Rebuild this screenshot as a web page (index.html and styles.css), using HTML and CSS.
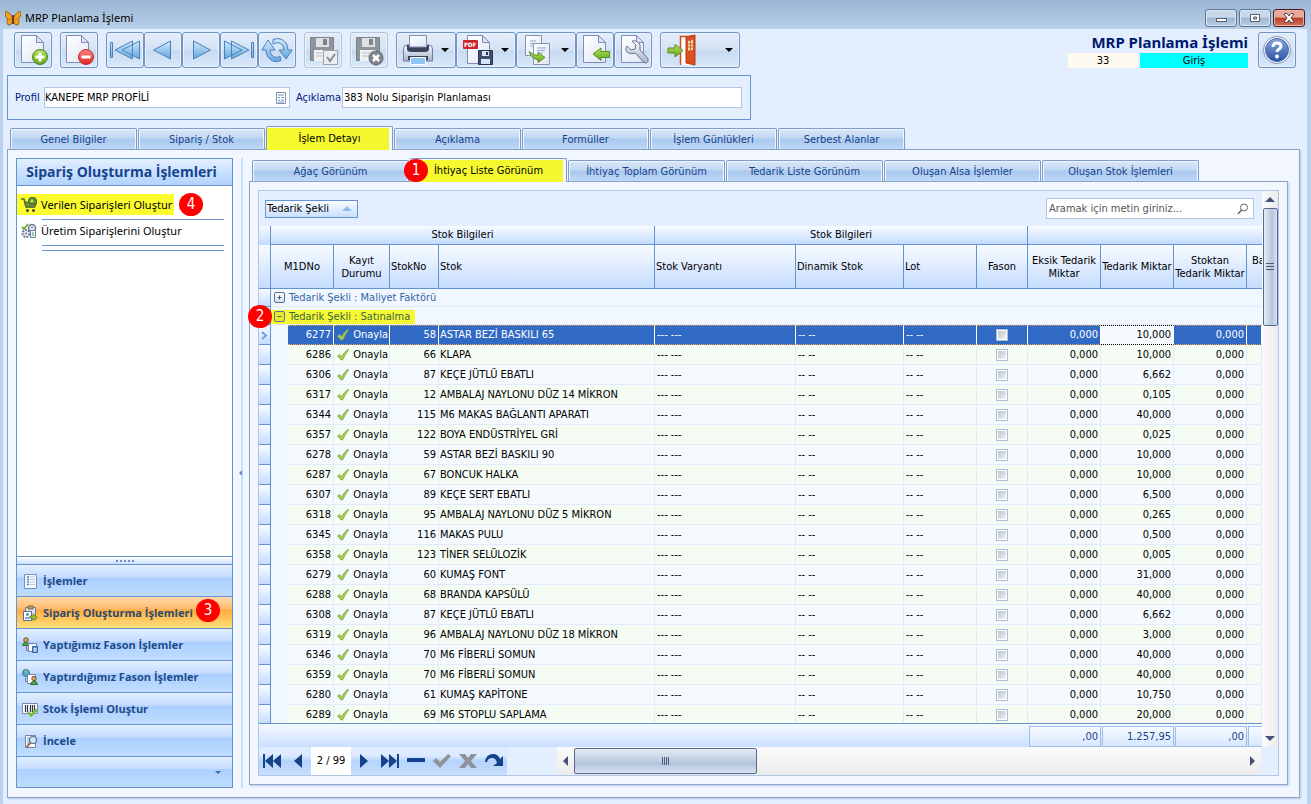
FILE: index.html
```html
<!DOCTYPE html>
<html lang="tr">
<head>
<meta charset="utf-8">
<title>MRP Planlama İşlemi</title>
<link rel="stylesheet" href="styles.css">
</head>
<body>
<svg class="defs" aria-hidden="true">
  <defs>
    <linearGradient id="g-blue" x1="0" y1="0" x2="0" y2="1"><stop offset="0" stop-color="#d3ebfb"/><stop offset="1" stop-color="#5fa6dc"/></linearGradient>
    <linearGradient id="g-page" x1="0" y1="0" x2="1" y2="1"><stop offset="0" stop-color="#fff"/><stop offset="1" stop-color="#dfe6f5"/></linearGradient>
    <linearGradient id="g-green" x1="0" y1="0" x2="0" y2="1"><stop offset="0" stop-color="#b9e35c"/><stop offset="1" stop-color="#5fa61c"/></linearGradient>
    <linearGradient id="g-red" x1="0" y1="0" x2="0" y2="1"><stop offset="0" stop-color="#ff8a80"/><stop offset="1" stop-color="#dc2020"/></linearGradient>
    <linearGradient id="g-help" x1="0" y1="0" x2="0" y2="1"><stop offset="0" stop-color="#88a8dd"/><stop offset="1" stop-color="#2a52a6"/></linearGradient>
    <linearGradient id="g-steel" x1="0" y1="0" x2="0" y2="1"><stop offset="0" stop-color="#fafcff"/><stop offset="1" stop-color="#a5afc8"/></linearGradient>
    <symbol id="i-page" viewBox="0 0 32 32"><path d="M5.500 1.500h15l7 7v20h-22z" fill="url(#g-page)" stroke="#7f8cba"/><path d="M20.500 1.500v7h7z" fill="#dbe3f3" stroke="#7f8cba"/></symbol>
    <symbol id="i-tick" viewBox="0 0 12 12"><path d="M.5 7 2.500 5.500l2 2Q7.500 3 10.500 .5h1.200Q8.500 5 5.500 11H4z" fill="#a5cf55" stroke="#83a94a" stroke-width=".8"/></symbol>
    <symbol id="i-disk" viewBox="0 0 26 26"><path d="M1.500 1.500h23v23h-23z" fill="#8e959d" stroke="#7c838b"/><path d="M7 2h13v9H7z" fill="#dfe2e5"/><path d="M14 3h4v6h-4z" fill="#7d848c"/><path d="M5 14h16v11H5z" fill="#eff1f3"/><path d="M7 17h12M7 20h12" stroke="#b9bec4"/></symbol>
  </defs>
</svg>

<div class="window">
  <header class="titlebar">
    <svg class="app-icon" viewBox="0 0 16 16"><path d="M8 9Q6 3 1 1L0 2q0 5 2.500 7-1.500 3 .5 6l3-.5Q7 13 8 9zM8 9q2-6 7-8l1 1q0 5-2.500 7 1.500 3-.5 6l-3-.5Q9 13 8 9z" fill="#f7a11c" stroke="#6b3c0c" stroke-width=".6"/><path d="M8 5v9" stroke="#5c3210" stroke-width="1.800"/><path d="M2.500 9 8 10l5.500-1" stroke="#a85f10" stroke-width=".6" fill="none"/></svg>
    <span class="title">MRP Planlama İşlemi</span>
    <div class="win-buttons">
      <button class="win" aria-label="Küçült"><svg viewBox="0 0 14 12"><rect x="2.500" y="6.500" width="10" height="3" fill="#fff" stroke="#555d6a"/></svg></button>
      <button class="win" aria-label="Büyüt"><svg viewBox="0 0 14 12"><path d="M2.500 2.500h9v7h-9zM5.500 5v2h3v-2z" fill="#fff" stroke="#555d6a" fill-rule="evenodd"/></svg></button>
      <button class="win close" aria-label="Kapat"><svg viewBox="0 0 14 12"><path d="m2 2 1-.5h2L7 4l2-2.500h2l1 .5-3 4 3 4-1 .5H9L7 8l-2 2.500H3L2 10l3-4z" fill="#fff" stroke="#5b4048"/></svg></button>
    </div>
  </header>

  <div class="body">
    <div class="toolbar">
      <div class="group"><button class="tool" aria-label="Yeni"><svg viewBox="0 0 32 32"><use href="#i-page" width="32" height="32" x="-1"/><circle cx="23" cy="23" r="7.500" fill="url(#g-green)" stroke="#4c7d24"/><path d="M23 18.500v9M18.500 23h9" stroke="#fff" stroke-width="3"/></svg></button></div>
      <div class="group"><button class="tool" aria-label="Sil"><svg viewBox="0 0 32 32"><use href="#i-page" width="32" height="32" x="-2"/><circle cx="23" cy="23" r="7.500" fill="url(#g-red)" stroke="#c62828"/><path d="M18.500 23h9" stroke="#fff" stroke-width="3"/></svg></button></div>
      <div class="group">
        <button class="tool" aria-label="İlk"><svg viewBox="0 0 32 32"><path d="M1.500 8.500h2v15h-2zM23.500 7v18L6 16zM30.500 7v18L13 16z" fill="url(#g-blue)" stroke="#4b80bd"/></svg></button>
        <button class="tool" aria-label="Önceki"><svg viewBox="0 0 32 32"><path d="M23.500 7v18L6.500 16z" fill="url(#g-blue)" stroke="#4b80bd"/></svg></button>
        <button class="tool" aria-label="Sonraki"><svg viewBox="0 0 32 32"><path d="M8.500 7v18l17-9z" fill="url(#g-blue)" stroke="#4b80bd"/></svg></button>
        <button class="tool" aria-label="Son"><svg viewBox="0 0 32 32"><path d="M28.500 8.500h2v15h-2zM8.500 7v18L26 16zM1.500 7v18L19 16z" fill="url(#g-blue)" stroke="#4b80bd"/></svg></button>
        <button class="tool" aria-label="Yenile"><svg viewBox="0 0 32 32"><path d="M12 5.500Q20 2.500 25 9q2 3 2 7h4l-6 9-7-9h5q0-5-4-7-4-1-7 1z" fill="url(#g-blue)" stroke="#4b80bd"/><path d="M20 26.500Q12 30 7 23q-2-3-2-7H1l6-10 7 10H9q0 5 4 7 4 1 6-1z" fill="url(#g-blue)" stroke="#4b80bd"/></svg></button>
      </div>
      <div class="group"><button class="tool" disabled aria-label="Kaydet"><svg viewBox="0 0 32 32"><use href="#i-disk" x="2" y="2" width="26" height="26"/><rect x="16.500" y="16.500" width="14" height="14" fill="#eceff2" stroke="#9ba3ab"/><path d="m20 23 3 4 5-7" fill="none" stroke="#838a92" stroke-width="2"/></svg></button></div>
      <div class="group"><button class="tool" disabled aria-label="Vazgeç"><svg viewBox="0 0 32 32"><use href="#i-disk" x="2" y="2" width="26" height="26"/><circle cx="23" cy="24" r="7" fill="#80868c" stroke="#61676d"/><path d="m20 21 6 6m0-6-6 6" stroke="#fff" stroke-width="2.600"/></svg></button></div>
      <div class="group">
        <button class="tool wide" aria-label="Yazdır"><svg viewBox="0 0 32 32"><path d="M7.500 1.500h17v13h-17z" fill="url(#g-page)" stroke="#8791b8"/><path d="M1.500 15q0-4 4-4h21q4 0 4 4v12h-29z" fill="url(#g-steel)" stroke="#6f7a9c"/><path d="M5 11h22v4q0 3-4 3H9q-4 0-4-3z" fill="#39445f"/><path d="M7.500 1.500h17V13h-17z" fill="url(#g-page)" stroke="#8791b8"/><path d="M6 22h20v4H6z" fill="#3a4560"/><path d="M8.500 23.500h15v7h-15z" fill="#8fc6f3" stroke="#fff"/></svg><i class="caret"></i></button>
        <button class="tool wide" aria-label="PDF kaydet"><svg viewBox="0 0 32 32"><path d="M5.500 1.500h15l7 7v21h-22z" fill="url(#g-page)" stroke="#7f8cba"/><path d="M20.500 1.500v7h7z" fill="#dbe3f3" stroke="#7f8cba"/><rect x="1" y="6" width="15" height="9" rx="1" fill="#c9252b"/><text x="2" y="13" class="pdf">PDF</text><path d="M16.500 16.500h14v14h-14z" fill="#414d69" stroke="#2c3650"/><path d="M20 17h7v5h-7zM19 25h9v5h-9z" fill="#d5e6f8"/><path d="M24 18h2v3h-2z" fill="#2c3650"/></svg><i class="caret"></i></button>
        <button class="tool wide" aria-label="Aktar"><svg viewBox="0 0 32 32"><path d="M3.500 1.500h16v20h-16z" fill="url(#g-page)" stroke="#8791b8"/><path d="M8 7h6M8 9.500h7M8 12h4" stroke="#8fa0cb"/><path d="M11.500 9.500h16v21h-16z" fill="url(#g-page)" stroke="#8791b8"/><path d="M15 14h9M15 16.500h8M15 19h6" stroke="#8fa0cb"/><path d="M7 17.500q4 4 9 4v-3l7 5-7 5v-3q-6 0-9-8z" fill="url(#g-green)" stroke="#5b8f22"/></svg><i class="caret"></i></button>
        <button class="tool" aria-label="İçe al"><svg viewBox="0 0 32 32"><use href="#i-page" width="32" height="32" x="-1"/><path d="m14 20 8-6v3.500h8.500v6H22v3z" fill="url(#g-green)" stroke="#5b8f22"/></svg></button>
        <button class="tool" aria-label="Ayarlar"><svg viewBox="0 0 32 32"><use href="#i-page" width="32" height="32" x="-1"/><path d="M10 12l4 4 4-1 1-4-4-4q6-1 8 4v5l7.500 8q2 4-2 5-2 0-3-2l-7-8q-8 2-9.500-3-.5-3 1-4z" fill="url(#g-steel)" stroke="#65718f"/></svg></button>
      </div>
      <div class="group"><button class="tool exit" aria-label="Çıkış"><svg viewBox="0 0 32 32"><path d="M14.500 31V2.500H28V31" fill="#fff" stroke="#d74a1d" stroke-width="1.500"/><path d="m20 3 9-2v30l-9-2z" fill="#dc5123" stroke="#b93d12"/><path d="m22 7 5-1v10l-5 .5z" fill="#f6dca5"/><path d="M24.500 6v10M22 10h5M22 13h5" stroke="#b9702c"/><path d="M2 14h7v-3.500l8 6L9 23v-4H2z" fill="url(#g-green)" stroke="#5b8f22"/></svg><i class="caret"></i></button></div>
      <div class="doc-info">
        <h1>MRP Planlama İşlemi</h1>
        <div class="status"><span class="doc-no">33</span><span class="doc-state">Giriş</span></div>
      </div>
      <button class="tool help" aria-label="Yardım"><svg viewBox="0 0 32 32"><circle cx="16" cy="16" r="13.500" fill="#fff" stroke="#8193ba"/><circle cx="16" cy="16" r="11.500" fill="url(#g-help)" stroke="#4d68a5"/><path d="M12 13q0-4 4-4t4 3.500q0 1.500-2.500 3-1.500 1-1.500 2.500" fill="none" stroke="#fff" stroke-width="3"/><circle cx="16" cy="22.500" r="2" fill="#fff"/></svg></button>
    </div>

    <form class="profile-box">
      <label for="profil">Profil</label>
      <div class="lookup"><input id="profil" value="KANEPE MRP PROFİLİ"><button type="button" aria-label="Seç"><svg viewBox="0 0 12 12"><path d="M1.500.5h9v11h-9z" fill="#fff" stroke="#7d8fb5"/><path d="M3 3h6M3 5.500h2M6 5.500h3M3 8h2M6 8h3M3 10h6" stroke="#7d8fb5"/></svg></button></div>
      <label for="aciklama" class="second">Açıklama</label>
      <input id="aciklama" value="383 Nolu Siparişin Planlaması">
    </form>

    <nav class="tabs main-tabs">
      <button class="tab">Genel Bilgiler</button><button class="tab">Sipariş / Stok</button><button class="tab active">İşlem Detayı</button><button class="tab">Açıklama</button><button class="tab">Formüller</button><button class="tab">İşlem Günlükleri</button><button class="tab">Serbest Alanlar</button>
    </nav>

    <main class="panel">
      <aside class="side">
        <h2>Sipariş Oluşturma İşlemleri</h2>
        <div class="side-items">
          <div class="side-row"><a href="#" class="side-link marked"><svg viewBox="0 0 16 16"><path d="M0 2h3l2 8h9" fill="none" stroke="#52662a" stroke-width="1.500"/><path d="M4 5h12l-2 5H5z" fill="#74913b" stroke="#52662a"/><circle cx="11.500" cy="4" r="4" fill="#5f8f32" stroke="#466b22"/><path d="m9 5 2-3 2 3z" fill="#d3ee4f"/><circle cx="6.500" cy="13.500" r="1.500" fill="#3f4a3a"/><circle cx="12.500" cy="13.500" r="1.500" fill="#3f4a3a"/></svg>Verilen Siparişleri Oluştur</a><b class="badge">4</b></div>
          <div class="side-row last"><a href="#" class="side-link"><svg viewBox="0 0 16 16"><circle cx="11" cy="5" r="3.500" fill="#e9edf5" stroke="#6f7a95" stroke-width="1.500"/><circle cx="5" cy="10.500" r="3.500" fill="#e9edf5" stroke="#6f7a95" stroke-width="2" stroke-dasharray="2 1"/><path d="M9.500 7.500h5v7h-5z" fill="#f4f7ff" stroke="#7382a8"/><path d="M11 10h2M11 12h2" stroke="#58a63c"/><path d="m1 4 2 2 4-5" fill="none" stroke="#67a835" stroke-width="1.800"/><circle cx="5" cy="10.500" r="1" fill="#6f7a95"/><circle cx="11" cy="4.500" r="1" fill="#6f7a95"/></svg>Üretim Siparişlerini Oluştur</a></div>
        </div>
        <div class="grip"><i></i><i></i><i></i><i></i><i></i></div>
        <button class="nav"><svg viewBox="0 0 16 16"><path d="M2.500 1.500h12v14h-12z" fill="#f5faff" stroke="#7590b8"/><path d="M5 4h2M5 6.500h2M5 9h2M5 11.500h2" stroke="#4c83c4" stroke-width="1.500"/><path d="M8 4h5M8 6.500h5M8 9h5M8 11.500h5" stroke="#b7c6da"/></svg>İşlemler</button>
        <button class="nav selected"><svg viewBox="0 0 16 16"><path d="M3.500 2.500h10v12h-10z" fill="#dce4f3" stroke="#6c799c"/><path d="M6 1h5v3H6z" fill="#b7a06b" stroke="#7d6b42"/><path d="M1.500 6.500h8v9h-8z" fill="#fff" stroke="#5b698d"/><circle cx="5.500" cy="9.500" r="1.300" fill="#42649a"/><path d="M3 13h5" stroke="#4a8fd0" stroke-width="1.500"/><path d="M8 11h3V8.500l4.500 4-4.500 3V13H8z" fill="#9bbf2c" stroke="#66861d" stroke-width=".7"/></svg>Sipariş Oluşturma İşlemleri<b class="badge">3</b></button>
        <button class="nav"><svg viewBox="0 0 16 16"><circle cx="4" cy="3" r="2.300" fill="#d8a56b" stroke="#78502b"/><path d="M.5 8.500q0-3 3.500-3t3.500 3z" fill="#54a545" stroke="#2d7439"/><path d="M4.500 9v4.500H7" stroke="#6c7996" fill="none"/><path d="M6.500 6.500h8v8h-8z" fill="#f7fbff" stroke="#7182a8"/><path d="M10.500 9.500h5v6h-5z" fill="#5a93d0" stroke="#38649e"/><path d="M12 11.500h2v2.500h-2z" fill="none" stroke="#fff" stroke-width=".8"/></svg>Yaptığımız Fason İşlemler</button>
        <button class="nav"><svg viewBox="0 0 16 16"><circle cx="4" cy="4" r="3.500" fill="#4f9fdc" stroke="#3574b4"/><path d="m2 2 3-1 1 2-2 2zM4 6l2 0-1 1z" fill="#81ca5b"/><path d="M3.500 9v3.500H6" fill="none" stroke="#6c7996"/><path d="M5.500 5.500h8v9h-8z" fill="#fff" stroke="#7485a9"/><circle cx="12" cy="9.500" r="2.200" fill="#d8a56b" stroke="#78502b"/><path d="M8.500 15.500q0-3 3.500-3t3.500 3z" fill="#54a545" stroke="#2d7439"/></svg>Yaptırdığımız Fason İşlemler</button>
        <button class="nav"><svg viewBox="0 0 16 16"><path d="M.5 2.500h15v10H.5z" fill="#fff" stroke="#7c87a3"/><path d="M3.500 4v7M5.500 4v7M8.500 4v7M10.500 4v7M12.500 4v7" stroke="#30384c" stroke-width="1.200"/><path d="m6 11 3 3.500 6-6" fill="none" stroke="#79b936" stroke-width="2.500"/></svg>Stok İşlemi Oluştur</button>
        <button class="nav"><svg viewBox="0 0 16 16"><path d="M3.500 2.500h10v12h-10z" fill="#f7fbff" stroke="#7485a9"/><path d="M5 5h6M5 7h4M5 9h3M5 11h3" stroke="#79a6d8"/><circle cx="11" cy="7" r="3.500" fill="#cfe8fa" stroke="#5d6f95" stroke-width="1.200"/><path d="m8.500 9.500-4 5" stroke="#a8622c" stroke-width="2"/></svg>İncele</button>
        <button class="nav more" aria-label="Diğer"><i></i></button>
      </aside>
      <div class="splitter"><i></i></div>

      <section class="detail">
        <nav class="tabs sub-tabs">
          <button class="tab">Ağaç Görünüm</button><button class="tab active"><b class="badge">1</b>İhtiyaç Liste Görünüm</button><button class="tab">İhtiyaç Toplam Görünüm</button><button class="tab">Tedarik Liste Görünüm</button><button class="tab">Oluşan Alsa İşlemler</button><button class="tab">Oluşan Stok İşlemleri</button>
        </nav>
        <div class="sub-panel">
          <div class="grid-frame">
            <div class="grid-top">
              <div class="grid-main">
                <div class="group-panel">
                  <button class="group-by">Tedarik Şekli<i></i></button>
                  <div class="search"><input type="text" placeholder="Aramak için metin giriniz..." aria-label="Ara"><svg viewBox="0 0 12 12"><circle cx="7" cy="4.500" r="3.500" fill="none" stroke="#666"/><path d="M4.500 7 1 11" stroke="#666" stroke-width="1.500"/></svg></div>
                </div>
                <div class="rows">
                  <table class="grid">
                    <colgroup><col class="c-ind"><col class="c-indent"><col class="c-id"><col class="c-state"><col class="c-no"><col class="c-stock"><col class="c-var"><col class="c-din"><col class="c-lot"><col class="c-fason"><col class="c-qty"><col class="c-qty"><col class="c-qty"><col class="c-cut"></colgroup>
                    <thead>
                      <tr class="bands"><th class="corner"></th><th colspan="5">Stok Bilgileri</th><th colspan="4">Stok Bilgileri</th><th colspan="4" class="end"></th></tr>
                      <tr class="heads"><th></th><th colspan="2">M1DNo</th><th>Kayıt Durumu</th><th class="l">StokNo</th><th class="l">Stok</th><th class="l">Stok Varyantı</th><th class="l">Dinamik Stok</th><th class="l">Lot</th><th>Fason</th><th>Eksik Tedarik Miktar</th><th>Tedarik Miktar</th><th>Stoktan Tedarik Miktar</th><th class="cut">Ba<br>&nbsp;</th></tr>
                    </thead>
                    <tbody id="rows">
                      <tr class="grp"><td class="ind"></td><td colspan="13"><button class="exp" aria-label="Aç"><svg viewBox="0 0 11 11"><path d="M5.500 3v5M3 5.500h5" stroke="#2c4168"/></svg></button><span>Tedarik Şekli : Maliyet Faktörü</span></td></tr>
                      <tr class="grp"><td class="ind"></td><td colspan="13"><div class="grp-mark"><button class="exp" aria-label="Kapat"><svg viewBox="0 0 11 11"><path d="M3 5.500h5" stroke="#2c4168"/></svg></button><span>Tedarik Şekli : Satınalma</span><b class="badge">2</b></div></td></tr>
                    </tbody>
                  </table>
                </div>
                <div class="summary"><span>,00</span><span>1.257,95</span><span>,00</span><span class="cut"></span></div>
              </div>
              <div class="vscroll"><i class="up"></i><div class="thumb"><svg viewBox="0 0 8 8"><path d="M0 .5h8M0 3.500h8M0 6.500h8" stroke="#4a5a80"/></svg></div><i class="down"></i></div>
            </div>
            <div class="grid-bottom">
              <div class="navigator">
                <button aria-label="İlk kayıt"><svg viewBox="0 0 20 16"><path d="M1 1h2v14H1zM11 1v14L3 8zM19 1v14l-8-7z"/></svg></button>
                <button aria-label="Önceki kayıt"><svg viewBox="0 0 20 16"><path d="M14 1v14L6 8z"/></svg></button>
                <span class="pos">2 / 99</span>
                <button aria-label="Sonraki kayıt"><svg viewBox="0 0 20 16"><path d="M6 1v14l8-7z"/></svg></button>
                <button aria-label="Son kayıt"><svg viewBox="0 0 20 16"><path d="M17 1h2v14h-2zM9 1v14l8-7zM1 1v14l8-7z"/></svg></button>
                <button aria-label="Sil"><svg viewBox="0 0 20 16"><path d="M1 5h18v4H1z"/></svg></button>
                <button aria-label="Onayla" class="off"><svg viewBox="0 0 20 16"><path d="m1 8 3-3 4 4 8-8 3 2-11 12z"/></svg></button>
                <button aria-label="İptal" class="off"><svg viewBox="0 0 20 16"><path d="M1 1h6l3 4 3-4h6l-6 7 6 7h-6l-3-4-3 4H1l6-7z"/></svg></button>
                <button aria-label="Yenile"><svg viewBox="0 0 20 16"><path d="M1 9Q2 1 9 1q5 0 7 5l3-3v10H9l4-3q-1-5-5-5-4 0-5 4z"/></svg></button>
              </div>
              <div class="hscroll"><i class="left"></i><div class="thumb"><svg viewBox="0 0 8 8"><path d="M.5 0v8M2.500 0v8M4.500 0v8M6.500 0v8" stroke="#4a5a80"/></svg></div><i class="right"></i></div>
            </div>
          </div>
        </div>
      </section>
    </main>
  </div>
</div>
<script src="grid.js"></script>
</body>
</html>
```
FILE: styles.css
```css
* { box-sizing: border-box; }
body {
  margin: 0;
  height: 100vh;
  overflow: hidden;
  font: 11px/14px "DejaVu Sans Condensed", "DejaVu Sans", sans-serif;
  color: #000;
}
button, input { font: inherit; color: inherit; margin: 0; padding: 0; border-radius: 0; }
button { cursor: pointer; }
svg { display: block; flex: none; }
.defs { position: absolute; width: 0; height: 0; }
.window {
  height: 100%;
  display: flex;
  flex-direction: column;
  background: #b9d1ea;
}
.titlebar {
  flex: none;
  height: 29px;
  display: flex;
  align-items: center;
  gap: 4px;
  padding: 6px 6px 0 5px;
  background: linear-gradient(#99b3d1, #b9d1ea);
  font: 11px/16px "Noto Sans", sans-serif;
}
.app-icon { width: 16px; height: 16px; }
.win-buttons { margin-left: auto; display: flex; gap: 2px; }
.win {
  width: 32px;
  height: 18px;
  display: grid;
  place-items: center;
  border: 1px solid #5f7693;
  border-radius: 3px;
  background: linear-gradient(#c8d8ea 45%, #9fb7d1 50%, #b9cee6);
  box-shadow: inset 0 0 0 1px #d9e6f4;
}
.win svg { width: 14px; height: 12px; }
.win.close { border-color: #4b1c24; background: linear-gradient(#e8a99c 45%, #bb3d27 50%, #d4735c); box-shadow: inset 0 0 0 1px #eab3a6; }
.body {
  flex: 1;
  min-height: 0;
  display: flex;
  flex-direction: column;
  margin: 0 4px 0 3px;
  padding: 3px 7px 6px 4px;
  background: #e3efff;
}

/* toolbar */
.toolbar { flex: none; display: flex; gap: 8px; padding: 0 4px 0 7px; height: 43px; align-items: flex-start; }
.group { display: flex; }
.tool {
  width: 38px;
  height: 36px;
  padding: 0 2px;
  display: flex;
  align-items: center;
  border: 1px solid #7294c5;
  border-radius: 3px;
  background: linear-gradient(#e4edfa, #d5e3f5 48%, #c8daf0 52%, #d9e8fb);
  box-shadow: inset 0 0 0 1px #e8f1fc;
}
.tool svg { width: 32px; height: 32px; }
.tool.wide, .tool.exit { width: 60px; justify-content: space-between; padding: 0 6px 0 5px; }
.tool.exit { width: 80px; }
.tool:disabled { border-color: #b5c5dc; opacity: 1; }
.caret { border: 4px solid transparent; border-top-color: #000; border-bottom: 0; }
.pdf { font: bold 6px "DejaVu Sans Condensed", sans-serif; fill: #fff; }
.doc-info { margin-left: auto; text-align: right; }
.doc-info h1 { margin: 0; font: bold 15px/21px "Noto Sans", sans-serif; color: #001a70; }
.status { display: flex; justify-content: flex-end; gap: 2px; text-align: center; line-height: 15px; }
.doc-no { width: 70px; background: #fffaf0; }
.doc-state { width: 108px; background: #0ff; }
.help { margin-left: 2px; }

.profile-box {
  flex: none;
  width: 744px;
  height: 45px;
  display: flex;
  align-items: center;
  padding: 0 8px 0 7px;
  border: 1px solid #6593cf;
  color: #00157a;
}
.profile-box label { width: 29px; }
.profile-box .second { width: 52px; padding-left: 6px; }
.profile-box input { height: 21px; flex: 1; min-width: 0; border: 1px solid #b0c6e4; background: #fff; color: #000; padding: 0 1px; outline: 0; }
.profile-box .lookup { width: 246px; display: flex; border: 1px solid #b0c6e4; background: #fff; }
.profile-box .lookup input { border: 0; height: 19px; padding: 0; }
.lookup button { border: 0; background: none; width: 17px; display: grid; place-items: center; }
.lookup svg { width: 12px; height: 12px; }

/* tabs */
.tabs { flex: none; display: flex; align-items: flex-end; gap: 1px; position: relative; z-index: 1; }
.main-tabs { height: 29px; padding-left: 3px; }
.tab {
  position: relative;
  height: 21px;
  width: 127px;
  padding: 2px 0 0;
  border: 1px solid #7f9bc9;
  border-bottom: 0;
  border-radius: 2px 2px 0 0;
  background: linear-gradient(#d9e7f9, #c3d9f3 45%, #a9c8ee 50%, #bfd8f7);
  box-shadow: inset 1px 1px 0 #eff6ff, inset -1px 0 0 #eff6ff;
  color: #15428b;
}
.tab.active {
  height: 24px;
  margin-bottom: -1px;
  padding-top: 0;
  background: linear-gradient(90deg, #f7fa2e, #f3f72f) no-repeat 0 1px / calc(100% - 3px) 100%, #f3f8ff;
  box-shadow: none;
  color: #000;
}
.sub-tabs .tab { width: 157px; }

.panel {
  flex: 1;
  min-height: 0;
  display: flex;
  border: 1px solid #8ba3c9;
  background: #f2f7ff;
  box-shadow: 1px 1px 2px #b9cbe8;
  padding: 8px 11px 9px 8px;
}
.badge {
  position: absolute;
  width: 24px;
  height: 23px;
  border-radius: 50%;
  background: #f00;
  color: #fff;
  font: 15px/23px "DejaVu Sans Condensed", sans-serif;
  text-align: center;
  z-index: 2;
}
.sub-tabs .badge { left: -7px; top: 0; }

/* left navigation */
.side {
  flex: none;
  width: 217px;
  display: flex;
  flex-direction: column;
  border: 1px solid #6593cf;
  background: #fff;
}
.side h2 {
  margin: 0;
  height: 27px;
  border-bottom: 1px solid #6593cf;
  background: linear-gradient(#e3efff, #b1d3ff);
  color: #15428b;
  font: bold 14px/26px "Open Sans", sans-serif;
  text-align: center;
  white-space: nowrap;
  padding-right: 6px;
}
.side-items { flex: 1; padding: 8px 8px 0 0; font: 11px/22px "Noto Sans", sans-serif; }
.side-row { position: relative; height: 26px; }
.side-row::after { content: ""; display: block; margin-left: 25px; margin-top: 3px; border-top: 1px solid #6593cf; }
.side-row.last::after { height: 4px; border-bottom: 1px solid #6593cf; }
.side-link { display: inline-flex; align-items: center; gap: 4px; height: 21px; padding: 0 2px 0 4px; color: #000; text-decoration: none; vertical-align: top; white-space: nowrap; }
.side-link svg { width: 16px; height: 16px; }
.side-link.marked { background: #fcfc2e; }
.side-row .badge { left: 162px; top: -1px; }
.grip { flex: none; height: 8px; display: flex; justify-content: center; align-items: center; gap: 2px; border-top: 1px solid #6593cf; background: linear-gradient(#fff, #cbdffb); }
.grip i { width: 2px; height: 2px; background: #6b8fc4; }
.nav {
  position: relative;
  flex: none;
  height: 32px;
  display: flex;
  align-items: center;
  gap: 5px;
  padding: 0 5px;
  border: 0;
  border-top: 1px solid #6593cf;
  background: linear-gradient(#e1eeff, #c8deff 38%, #acd0ff 42%, #c0dcff);
  color: #1e4a8c;
  font: bold 11px/16px "Open Sans", sans-serif;
  white-space: nowrap;
}
.nav svg { width: 16px; height: 16px; }
.nav.selected { background: linear-gradient(#ffd9aa, #ffbb6e 38%, #ffab3f 42%, #fee17a); color: #2a4a72; }
.nav .badge { left: 179px; top: 2px; }
.nav.more { height: 31px; justify-content: flex-end; padding-right: 11px; }
.nav.more i { border: 3px solid transparent; border-top-color: #3d6db3; border-bottom: 0; }
.splitter { flex: none; width: 16px; display: flex; align-items: center; padding-left: 6px; background: linear-gradient(90deg, transparent 8px, #c7dfff 8px 10px, transparent 10px); }
.splitter i { border: 3px solid transparent; border-left: 0; border-right-color: #5d8fd0; }

.detail { flex: 1; min-width: 0; display: flex; flex-direction: column; padding-bottom: 3px; }
.sub-tabs { height: 23px; padding-left: 3px; }
.sub-panel { flex: 1; min-height: 0; display: flex; padding: 8px; border: 1px solid #8ba3c9; background: #f2f7ff; box-shadow: 1px 1px 2px #b9cbe8; }
.grid-frame { flex: 1; min-width: 0; display: flex; flex-direction: column; border: 1px solid #b0c6e4; background: #e3efff; }
.grid-top { flex: 1; min-height: 0; display: flex; }
.grid-main { flex: 1; min-width: 0; display: flex; flex-direction: column; }
.group-panel { flex: none; height: 35px; display: flex; justify-content: space-between; align-items: center; padding: 0 8px 0 6px; }
.group-by { width: 93px; height: 18px; display: flex; align-items: center; justify-content: space-between; padding: 0 5px 0 1px; border: 1px solid #6593cf; background: linear-gradient(#f9fcff, #c9dfff); }
.group-by i { border: 5px solid transparent; border-top: 0; border-bottom-color: #8fbdf2; }
.search { width: 208px; height: 21px; display: flex; align-items: center; border: 1px solid #b0c6e4; background: #fff; padding: 0 4px 0 2px; }
.search input { flex: 1; min-width: 0; border: 0; outline: 0; background: none; }
.search input::placeholder { color: #555; opacity: 1; }
.search svg { width: 12px; height: 12px; }

/* grid */
.rows { flex: 1; min-height: 0; overflow-x: visible; overflow-y: clip; background: #f0f7ff; }
.grid { width: 100%; table-layout: fixed; border-collapse: separate; border-spacing: 0; }
.c-ind { width: 12px; } .c-indent { width: 17px; } .c-id { width: 46px; } .c-state { width: 56px; } .c-no { width: 49px; }
.c-var { width: 141px; } .c-din { width: 108px; } .c-lot { width: 73px; } .c-fason { width: 51px; } .c-qty { width: 73px; } .c-cut { width: 15px; }
.grid th { font-weight: normal; padding: 0; border-right: 1px solid #6593cf; border-bottom: 1px solid #6593cf; overflow: hidden; background: linear-gradient(#f8fbff, #c5dcff); }
.grid th.l { text-align: left; padding-left: 1px; }
.grid th.cut { text-align: left; padding-left: 5px; border-right: 0; white-space: nowrap; }
.grid th.end { border-right: 0; }
.grid .bands th { height: 19px; }
.grid .bands .corner { border-bottom: 0; }
.grid .heads th { height: 44px; line-height: 13px; }
.grid td { padding: 1px 0 0; height: 20px; overflow: hidden; white-space: nowrap; border-right: 1px solid #e0ecfc; border-bottom: 1px solid #e0ecfc; background: #f5faff; }
.grid td.ind { border-right: 1px solid #6593cf; border-bottom: 1px solid #6593cf; background: linear-gradient(#f8fbff, #c5dcff); }
.grid td.indent { background: #f0f7ff; border: 0; }
.grid .odd td:not(.ind):not(.indent) { background: #f4fcf4; }
.grid .grp td { height: 18px; padding-top: 0; }
.grid .grp td:not(.ind) { background: #f0f7ff; color: #3764a8; padding-left: 3px; border-right: 0; overflow: visible; }
.exp { width: 11px; height: 11px; display: inline-block; border: 1px solid #5d7297; border-radius: 2px; background: linear-gradient(#fff, #d3dff0); vertical-align: middle; }
.exp svg { width: 9px; height: 9px; }
.exp + span { margin-left: 4px; }
.grp-mark { position: relative; display: inline-block; height: 14px; line-height: 14px; background: #f5f833; margin-left: -3px; padding: 0 5px 0 3px; color: #386642; vertical-align: top; margin-top: 2px; }
.grp-mark .exp { background: #e9e92c; vertical-align: top; margin-top: 1px; }
.grp-mark .badge { left: -23px; top: -5px; }
.grid td.num { text-align: right; padding-right: 2px; }
.grid td.txt { padding-left: 1px; }
.grid td.dash { padding-left: 2px; }
.state { display: flex; align-items: center; justify-content: space-between; padding: 0 1px 0 3px; }
.state svg { width: 12px; height: 12px; }
.grid td.chk { text-align: center; }
.chk input { appearance: none; display: block; width: 12px; height: 12px; margin: 0 auto; border: 1px solid #a9bcd9; background: linear-gradient(135deg, #b5bbc6, #fafafa); box-shadow: inset 0 0 0 1px #fff; }
.grid .sel td:not(.ind):not(.indent) { background: #316ac5; color: #fff; border-right-color: #fff; border-top: 1px dotted #f0a040; border-bottom: 1px dotted #f0a040; padding-top: 0; }
.grid .sel td.focus:not(.ind) { background: #f7fbff; color: #000; border-top-color: #000; border-bottom-color: #000; }
.sel .ind svg { width: 7px; height: 9px; margin: 0 auto; }
.summary { flex: none; height: 24px; display: flex; justify-content: flex-end; align-items: center; gap: 1px; padding-top: 1px; border-top: 1px solid #6593cf; background: linear-gradient(#f6faff, #c9dfff); color: #1c4587; line-height: 19px; text-align: right; }
.summary span { width: 72px; height: 21px; border: 1px solid #9cbde8; background: linear-gradient(#f6faff, #d7e7ff); padding-right: 2px; }
.summary .cut { width: 14px; border-right: 0; }

/* scroll bars */
.vscroll { flex: none; width: 16px; display: flex; flex-direction: column; align-items: center; padding: 6px 0; background: linear-gradient(90deg, #fbfbfb, #ebebeb); }
.vscroll .thumb { width: 15px; height: 118px; margin-top: 6px; display: grid; place-items: center; border: 1px solid #56698f; border-radius: 2px; background: linear-gradient(90deg, #e6edf6, #b4c5da 60%, #d6e3f3); }
.thumb svg { width: 8px; height: 8px; }
.up { border: 5px solid transparent; border-top: 0; border-bottom-color: #43527a; }
.down { margin-top: auto; border: 5px solid transparent; border-bottom: 0; border-top-color: #43527a; }
.grid-bottom { flex: none; height: 28px; display: flex; padding-right: 17px; }
.navigator { flex: none; width: 248px; display: flex; align-items: center; background: linear-gradient(#dcebff 30%, #b5d3fd 50%, #c8dfff); }
.navigator button { width: 26px; height: 28px; display: grid; place-items: center; border: 0; background: none; fill: #15428b; }
.navigator svg { width: 20px; height: 16px; }
.navigator .off { fill: #8e9299; }
.pos { width: 40px; line-height: 28px; background: #fff; text-align: center; }
.hscroll { flex: 1; min-width: 0; margin-left: 50px; display: flex; align-items: center; padding: 0 6px; background: linear-gradient(#fbfbfb, #ebebeb); }
.left { border: 5px solid transparent; border-left: 0; border-right-color: #43527a; }
.right { margin-left: auto; border: 5px solid transparent; border-right: 0; border-left-color: #43527a; }
.hscroll .thumb { width: 183px; height: 26px; margin-left: 6px; display: grid; place-items: center; border: 1px solid #56698f; border-radius: 2px; background: linear-gradient(#e6edf6, #b4c5da 60%, #d6e3f3); }
```
FILE: grid.js
```js
const items = [
  [6277, 58, "ASTAR BEZİ BASKILI 65", "10,000"],
  [6286, 66, "KLAPA", "10,000"],
  [6306, 87, "KEÇE JÜTLÜ EBATLI", "6,662"],
  [6317, 12, "AMBALAJ NAYLONU DÜZ 14 MİKRON", "0,105"],
  [6344, 115, "M6 MAKAS BAĞLANTI APARATI", "40,000"],
  [6357, 122, "BOYA ENDÜSTRİYEL GRİ", "0,025"],
  [6278, 59, "ASTAR BEZİ BASKILI 90", "10,000"],
  [6287, 67, "BONCUK HALKA", "10,000"],
  [6307, 89, "KEÇE SERT EBATLI", "6,500"],
  [6318, 95, "AMBALAJ NAYLONU DÜZ 5 MİKRON", "0,265"],
  [6345, 116, "MAKAS PULU", "0,500"],
  [6358, 123, "TİNER SELÜLOZİK", "0,005"],
  [6279, 60, "KUMAŞ FONT", "31,000"],
  [6288, 68, "BRANDA KAPSÜLÜ", "40,000"],
  [6308, 87, "KEÇE JÜTLÜ EBATLI", "6,662"],
  [6319, 96, "AMBALAJ NAYLONU DÜZ 18 MİKRON", "3,000"],
  [6346, 70, "M6 FİBERLİ SOMUN", "40,000"],
  [6359, 70, "M6 FİBERLİ SOMUN", "40,000"],
  [6280, 61, "KUMAŞ KAPİTONE", "10,750"],
  [6289, 69, "M6 STOPLU SAPLAMA", "20,000"]
];

const pointer = '<svg viewBox="0 0 7 9"><path d="m1 1 4 3.500-4 3.500" fill="none" stroke="#6a9be0" stroke-width="1.800"/></svg>';

document.getElementById("rows").insertAdjacentHTML("beforeend", items.map(([id, no, name, qty], i) => `
  <tr class="${i === 0 ? "sel" : i % 2 ? "odd" : ""}">
    <td class="ind">${i === 0 ? pointer : ""}</td><td class="indent"></td>
    <td class="num">${id}</td>
    <td><div class="state"><svg><use href="#i-tick"/></svg>Onayla</div></td>
    <td class="num">${no}</td><td class="txt">${name}</td>
    <td class="dash">--- ---</td><td class="dash">-- --</td><td class="dash">-- --</td>
    <td class="chk"><input type="checkbox" aria-label="Fason ${id}"></td>
    <td class="num">0,000</td><td class="num focus">${qty}</td><td class="num">0,000</td><td></td>
  </tr>`).join(""));
```
